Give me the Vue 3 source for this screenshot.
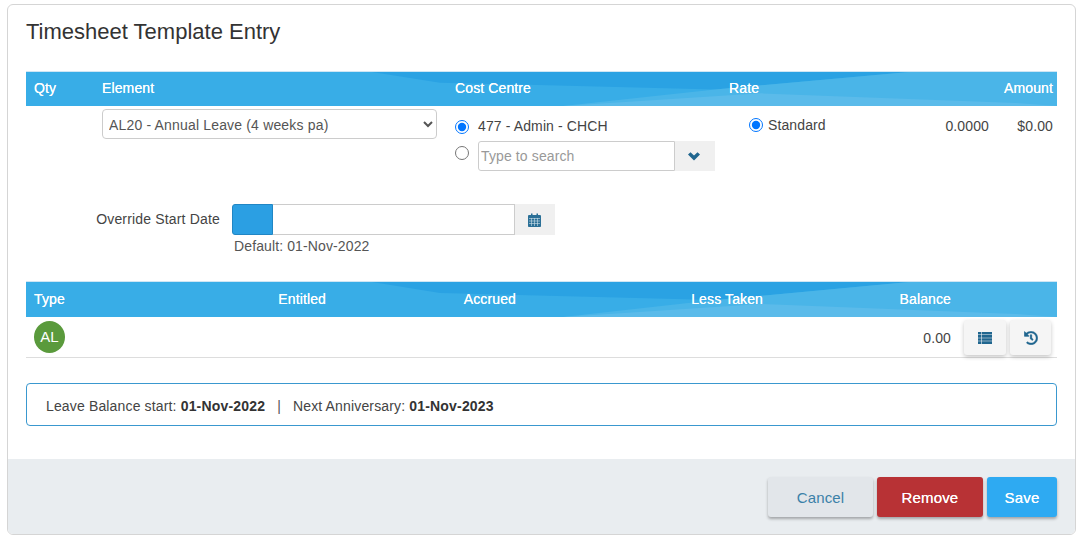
<script setup>
const wedges = [
  { points: '346,0 883,0 689,18 414,11', fill: '#2aa2e3' },
  { points: '883,0 1031,0 1031,35 537,35 689,18', fill: '#4ab5e8' },
  { points: '537,35 735,22 990,32 1031,35', fill: '#5bbbea' },
]
const balanceHeads = [
  { label: 'Entitled', width: '292px' },
  { label: 'Accrued', width: '190px' },
  { label: 'Less Taken', width: '247px' },
  { label: 'Balance', width: '188px' },
]
</script>

<template>
  <div class="card">
    <div class="main">
      <h1 class="title">Timesheet Template Entry</h1>

      <div class="band entry-grid entry-band">
        <svg class="band-art" viewBox="0 0 1031 35" preserveAspectRatio="none" aria-hidden="true">
          <polygon v-for="w in wedges" :key="w.points" :points="w.points" :fill="w.fill" />
        </svg>
        <span class="head qty">Qty</span>
        <span class="head">Element</span>
        <span class="head">Cost Centre</span>
        <div class="head rate-head"><span>Rate</span><span>Amount</span></div>
      </div>

      <div class="entry-grid entry-row">
        <span></span>
        <select class="element">
          <option>AL20 - Annual Leave (4 weeks pa)</option>
        </select>
        <div class="cost">
          <label class="cost-line first">
            <input type="radio" name="cost" checked />
            <span>477 - Admin - CHCH</span>
          </label>
          <div class="cost-line second">
            <input type="radio" name="cost" />
            <div class="search">
              <input class="search-input" type="text" placeholder="Type to search" />
              <span class="addon search-addon">
                <svg width="12" height="9" viewBox="0 0 12 9"><polygon fill="#20668f" points="0,2.6 2.5,0.2 6,3.6 9.5,0.2 12,2.6 6,8.6"/></svg>
              </span>
            </div>
          </div>
        </div>
        <div class="rate">
          <label class="standard"><input type="radio" checked /><span>Standard</span></label>
          <span class="value">0.0000</span>
          <span class="amount">$0.00</span>
        </div>
      </div>

      <div class="date-row">
        <label class="date-label">Override Start Date</label>
        <div class="date-col">
          <div class="date-group">
            <span class="date-swatch"></span>
            <input class="date-input" type="text" />
            <span class="addon date-addon">
              <svg class="cal" width="13" height="14" viewBox="0 0 13 14">
                <path fill="#2b7097" d="M0 3.2C0 2.5.5 2 1.2 2H3V.5h1.5V2h4V.5H10V2h1.8c.7 0 1.2.5 1.2 1.2V13c0 .6-.5 1-1 1H1c-.5 0-1-.4-1-1z"/>
                <path stroke="#cfe0ea" stroke-width=".6" fill="none" d="M1 5.5h11M1 8h11M1 10.5h11M3.5 5v8M6.5 5v8M9.5 5v8"/>
              </svg>
            </span>
          </div>
          <div class="default">Default: 01-Nov-2022</div>
        </div>
      </div>

      <div class="band balance-band">
        <svg class="band-art" viewBox="0 0 1031 35" preserveAspectRatio="none" aria-hidden="true">
          <polygon v-for="w in wedges" :key="w.points" :points="w.points" :fill="w.fill" />
        </svg>
        <span class="head type">Type</span>
        <span v-for="h in balanceHeads" :key="h.label" class="head num" :style="{ width: h.width }">{{ h.label }}</span>
      </div>

      <div class="balance-row">
        <span class="badge">AL</span>
        <span class="balance">0.00</span>
        <button class="tool first-tool" aria-label="Details">
          <svg width="14" height="12" viewBox="0 0 14 12">
            <path fill="#20668f" d="M0 0h3v2.6H0zM3.6 0H14v2.6H3.6zM0 3.1h3v2.6H0zM3.6 3.1H14v2.6H3.6zM0 6.2h3v2.6H0zM3.6 6.2H14v2.6H3.6zM0 9.3h3v2.6H0zM3.6 9.3H14v2.6H3.6z"/>
          </svg>
        </button>
        <button class="tool" aria-label="History">
          <svg width="14" height="14" viewBox="0 0 512 512"><path fill="#20668f" stroke="#20668f" stroke-width="12" d="M504 255.531c.253 136.64-111.18 248.372-247.82 248.468-59.015.042-113.223-20.53-155.822-54.911-11.077-8.94-11.905-25.541-1.839-35.607l11.267-11.267c8.609-8.609 22.353-9.551 31.891-1.984C173.062 425.135 212.781 440 256 440c101.705 0 184-82.311 184-184 0-101.705-82.311-184-184-184-48.814 0-93.149 18.969-126.068 49.932l50.754 50.754c10.08 10.08 2.941 27.314-11.313 27.314H24c-8.837 0-16-7.163-16-16V38.627c0-14.254 17.234-21.393 27.314-11.314l49.372 49.372C129.209 34.136 189.552 8 256 8c136.81 0 247.747 110.78 248 247.531zm-180.912 78.784l9.823-12.63c8.138-10.463 6.253-25.542-4.21-33.679L288 256.349V152c0-13.255-10.745-24-24-24h-16c-13.255 0-24 10.745-24 24v135.651l65.409 50.874c10.463 8.137 25.541 6.253 33.679-4.21z"/></svg>
        </button>
      </div>

      <div class="info">
        Leave Balance start: <b>01-Nov-2022</b><span class="sep">|</span>Next Anniversary: <b>01-Nov-2023</b>
      </div>
    </div>

    <div class="footer">
      <button class="btn cancel">Cancel</button>
      <button class="btn remove">Remove</button>
      <button class="btn save">Save</button>
    </div>
  </div>
</template>

<style>
html, body { margin: 0; background: #fff; }
</style>

<style scoped>
.card {
  box-sizing: border-box;
  width: 1069px;
  height: 531px;
  margin: 4px 0 0 7px;
  border: 1px solid #d5d5d5;
  border-radius: 6px;
  overflow: hidden;
  display: flex;
  flex-direction: column;
  font-family: "Liberation Sans", Arial, sans-serif;
  font-size: 14px;
  letter-spacing: .12px;
  color: #444;
  background: #fff;
}
.main { flex: 1; padding: 0 18px; }
.title {
  margin: 0;
  height: 66px;
  padding-top: 14px;
  box-sizing: border-box;
  font-size: 22px;
  line-height: 26px;
  font-weight: 400;
  letter-spacing: 0;
  color: #333;
}
.band {
  position: relative;
  height: 36px;
  background: #38ade7;
  border-top: 1px solid #cfe6f4;
  box-sizing: border-box;
  align-items: center;
}
.band-art { position: absolute; inset: 0; width: 100%; height: 100%; }
.head { position: relative; color: #fff; font-size: 14px; text-shadow: 0 0 .6px #fff; }
.entry-grid { display: grid; grid-template-columns: 76px 353px 274px 1fr; }
.entry-band { height: 35px; padding-bottom: 3px; }
.qty { padding-left: 8px; }
.rate-head { display: flex; justify-content: space-between; padding-right: 4px; }

.entry-row { height: 98px; }
.element {
  box-sizing: border-box;
  width: 335px;
  height: 30px;
  margin-top: 3px;
  padding: 1px 0 0 2px;
  border: 1px solid #ccc;
  border-radius: 4px;
  background: #fff;
  color: #555;
  font: 14px "Liberation Sans", Arial, sans-serif;
  letter-spacing: .17px;
}
.cost { padding-top: 4px; }
.cost-line { display: flex; color: #444; }
.cost-line input[type="radio"] { margin: 0 9px 0 0; width: 14px; height: 14px; }
.first { height: 31px; align-items: center; }
.first input[type="radio"] { position: relative; top: 1px; }
.second { align-items: flex-start; }
.second > input[type="radio"] { margin-top: 5px !important; }
.search { display: flex; height: 30px; }
.search-input {
  box-sizing: border-box;
  width: 197px;
  height: 30px;
  padding: 0 2px;
  border: 1px solid #ccc;
  border-radius: 3px 0 0 3px;
  font: 14px "Liberation Sans", Arial, sans-serif;
  letter-spacing: .12px;
  outline: none;
}
.search-input::placeholder { color: #999; }
.addon { display: flex; align-items: center; justify-content: center; background: #f0f0f0; }
.search-addon { width: 40px; padding-right: 3px; box-sizing: border-box; }
.rate { display: flex; align-items: flex-start; padding-top: 11px; }
.standard { display: flex; align-items: center; gap: 5px; margin-left: 20px; color: #444; height: 16px; }
.standard input { margin: 0; width: 14px; height: 14px; }
.value { margin-left: auto; margin-top: 1px; }
.amount { width: 68px; padding-right: 4px; box-sizing: border-box; text-align: right; margin-top: 1px; }

.date-row { display: flex; height: 77px; }
.date-label { width: 194px; padding-top: 7px; box-sizing: border-box; text-align: right; color: #444; letter-spacing: .17px; }
.date-col { margin-left: 12px; }
.date-group { display: flex; height: 31px; width: 323px; }
.date-swatch {
  width: 41px;
  box-sizing: border-box;
  background: #2b9fe3;
  border: 1px solid #2186c4;
  border-radius: 3px 0 0 3px;
}
.date-input {
  box-sizing: border-box;
  width: 242px;
  border: 1px solid #ccc;
  border-left: 0;
  outline: none;
}
.date-addon { width: 40px; }
.cal { position: relative; left: -1px; }
.default { margin: 3px 0 0 2px; line-height: 16px; color: #555; }

.balance-band { display: flex; padding-bottom: 2px; }
.type { width: 34px; margin-left: 8px; margin-right: -34px; }
.num { box-sizing: border-box; text-align: right; }

.balance-row {
  display: flex;
  align-items: flex-start;
  height: 41px;
  border-bottom: 1px solid #ddd;
  box-sizing: border-box;
  padding-top: 4px;
}
.badge {
  width: 31px;
  height: 32px;
  margin-left: 8px;
  border-radius: 50%;
  background: #5a9a3c;
  color: #fff;
  text-align: center;
  font-size: 15px;
  letter-spacing: 0;
  line-height: 32px;
}
.balance { margin-left: auto; margin-top: 9px; margin-right: 13px; }
.tool {
  display: flex;
  align-items: center;
  justify-content: center;
  width: 42px;
  height: 35px;
  margin-top: -1px;
  border: 0;
  border-radius: 3px;
  background: #f5f5f5;
  box-shadow: 0 2px 4px rgba(0, 0, 0, .22);
  padding: 0;
}
.first-tool { margin-right: 4px; }
.tool:last-child { width: 41px; margin-right: 6px; }

.info {
  box-sizing: border-box;
  height: 43px;
  margin-top: 25px;
  padding-left: 19px;
  border: 1px solid #3a98cf;
  border-radius: 4px;
  line-height: 45px;
  letter-spacing: .15px;
  color: #444;
}
.info b { color: #333; letter-spacing: .18px; }
.sep { margin: 0 12px; color: #555; }

.footer {
  display: flex;
  justify-content: flex-end;
  gap: 4px;
  height: 75px;
  padding: 18px 18px 0 0;
  box-sizing: border-box;
  background: #e9edf0;
}
.btn {
  height: 40px;
  border: 0;
  border-radius: 3px;
  font: 15px "Liberation Sans", Arial, sans-serif;
  letter-spacing: .15px;
  box-shadow: 0 2px 3px rgba(0, 0, 0, .3);
  padding: 0;
}
.cancel { width: 105px; background: #e2e6ea; color: #3b81a8; }
.remove { width: 106px; background: #b83235; color: #fff; text-shadow: 0 0 .5px #fff; }
.save { width: 70px; background: #2eaaf2; color: #fff; text-shadow: 0 0 .5px #fff; }
</style>
